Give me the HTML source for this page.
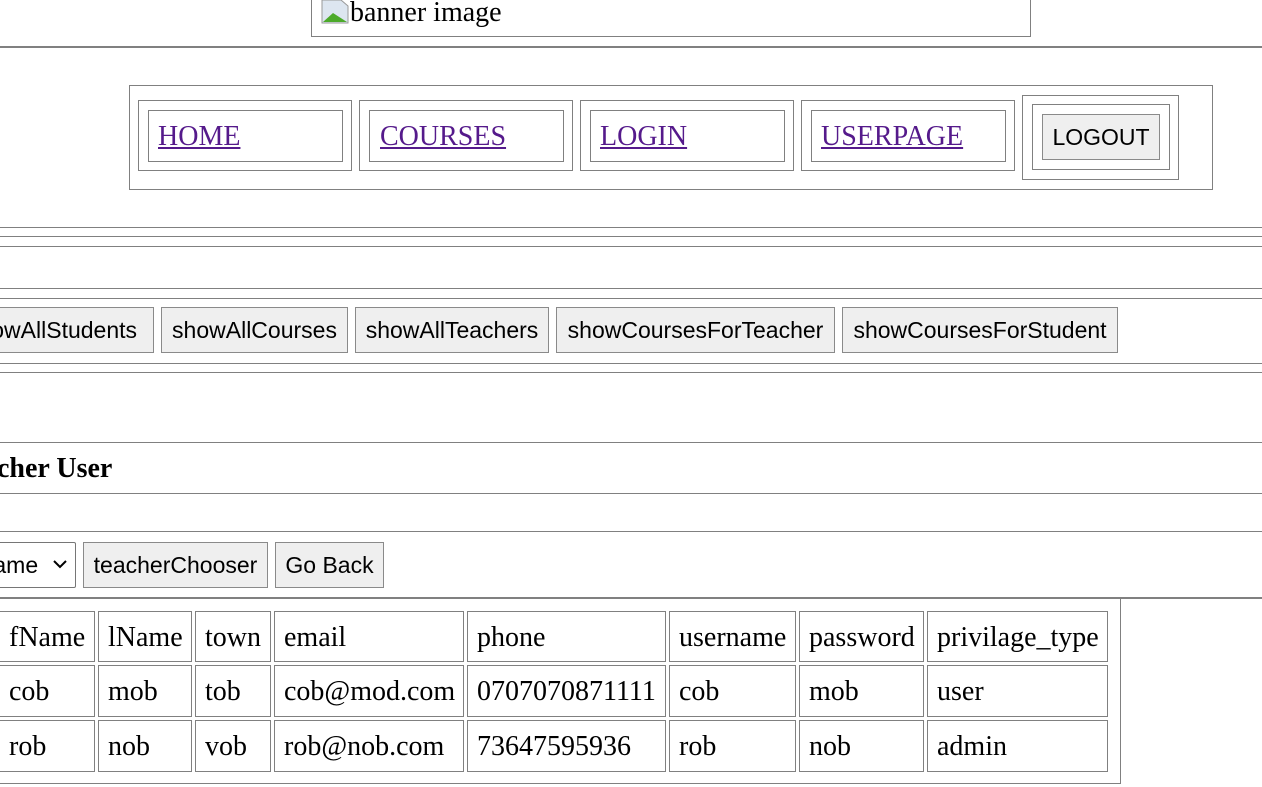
<!DOCTYPE html>
<html><head><meta charset="utf-8"><style>
body{margin:0;width:1262px;height:787px;overflow:hidden;position:relative;background:#fff;font-family:"Liberation Serif",serif;}
.a{position:absolute;box-sizing:border-box;}
.b{border:1px solid #808080;}
.h{position:absolute;left:0;width:1262px;height:1px;background:#808080;}
a{color:#551a8b;font-size:28px;text-decoration:underline;}
.btn{position:absolute;box-sizing:border-box;border:1px solid #8a8a8a;background:#efefef;font-family:"Liberation Sans",sans-serif;font-size:23px;color:#000;text-align:center;line-height:44px;height:46px;white-space:nowrap;}
.c{position:absolute;box-sizing:border-box;border:1px solid #808080;font-size:28px;line-height:52px;padding-left:9px;white-space:nowrap;}
</style></head><body>
<div class="a b" style="left:311px;top:-2px;width:720px;height:39px;"></div>
<svg class="a" style="left:321px;top:0px" width="28" height="24" viewBox="0 0 28 24"><path d="M1 0H20L27 6V23H1Z" fill="#dde6f0" stroke="#999"/><path d="M2 22L12 13 26 22Z" fill="#4caa2a"/></svg>
<div class="a" style="left:350px;top:-4px;font-size:28px;line-height:34px;">banner image</div>
<div class="h" style="top:46px;height:2px;"></div>

<div class="a b" style="left:129px;top:85px;width:1084px;height:105px;"></div>
<div class="a b" style="left:138px;top:100px;width:214px;height:71px;"></div>
<div class="a b" style="left:148px;top:110px;width:195px;height:52px;padding:10px 0 0 9px;"><a>HOME</a></div>
<div class="a b" style="left:359px;top:100px;width:214px;height:71px;"></div>
<div class="a b" style="left:369px;top:110px;width:195px;height:52px;padding:10px 0 0 10px;"><a>COURSES</a></div>
<div class="a b" style="left:580px;top:100px;width:214px;height:71px;"></div>
<div class="a b" style="left:590px;top:110px;width:195px;height:52px;padding:10px 0 0 9px;"><a>LOGIN</a></div>
<div class="a b" style="left:801px;top:100px;width:214px;height:71px;"></div>
<div class="a b" style="left:811px;top:110px;width:195px;height:52px;padding:10px 0 0 9px;"><a>USERPAGE</a></div>
<div class="a b" style="left:1022px;top:95px;width:157px;height:85px;"></div>
<div class="a b" style="left:1032px;top:104px;width:138px;height:66px;"></div>
<div class="btn" style="left:1042px;top:114px;width:118px;">LOGOUT</div>

<div class="h" style="top:227px"></div><div class="h" style="top:236px"></div><div class="h" style="top:246px"></div>
<div class="h" style="top:288px"></div><div class="h" style="top:298px"></div>
<div class="btn" style="left:-50px;top:307px;width:204px;">showAllStudents</div>
<div class="btn" style="left:161px;top:307px;width:187px;">showAllCourses</div>
<div class="btn" style="left:355px;top:307px;width:194px;">showAllTeachers</div>
<div class="btn" style="left:556px;top:307px;width:279px;">showCoursesForTeacher</div>
<div class="btn" style="left:842px;top:307px;width:276px;">showCoursesForStudent</div>
<div class="h" style="top:363px"></div><div class="h" style="top:372px"></div>
<div class="h" style="top:442px"></div>
<div class="a" style="left:-3px;top:452px;font-size:28px;font-weight:bold;line-height:34px;">cher User</div>
<div class="h" style="top:493px"></div>
<div class="h" style="top:531px"></div>
<div class="a" style="left:-14px;top:542px;width:90px;height:46px;border:1px solid #767676;border-radius:2px;font-family:'Liberation Sans',sans-serif;font-size:23px;line-height:44px;">&nbsp;ame
<svg style="position:absolute;left:66px;top:17px" width="14" height="10"><path d="M1 1L7 7 13 1" fill="none" stroke="#000" stroke-width="2"/></svg></div>
<div class="btn" style="left:83px;top:542px;width:185px;">teacherChooser</div>
<div class="btn" style="left:275px;top:542px;width:109px;">Go Back</div>
<div class="h" style="top:597px;height:2px;"></div>
<div class="a b" style="left:-10px;top:598px;width:1131px;height:186px;"></div>

<div class="c" style="left:-1px;top:611px;width:96px;height:51px;">fName</div>
<div class="c" style="left:98px;top:611px;width:94px;height:51px;">lName</div>
<div class="c" style="left:195px;top:611px;width:76px;height:51px;">town</div>
<div class="c" style="left:274px;top:611px;width:190px;height:51px;">email</div>
<div class="c" style="left:467px;top:611px;width:199px;height:51px;">phone</div>
<div class="c" style="left:669px;top:611px;width:127px;height:51px;">username</div>
<div class="c" style="left:799px;top:611px;width:125px;height:51px;">password</div>
<div class="c" style="left:927px;top:611px;width:181px;height:51px;">privilage_type</div>

<div class="c" style="left:-1px;top:665px;width:96px;height:52px;">cob</div>
<div class="c" style="left:98px;top:665px;width:94px;height:52px;">mob</div>
<div class="c" style="left:195px;top:665px;width:76px;height:52px;">tob</div>
<div class="c" style="left:274px;top:665px;width:190px;height:52px;">cob@mod.com</div>
<div class="c" style="left:467px;top:665px;width:199px;height:52px;">0707070871111</div>
<div class="c" style="left:669px;top:665px;width:127px;height:52px;">cob</div>
<div class="c" style="left:799px;top:665px;width:125px;height:52px;">mob</div>
<div class="c" style="left:927px;top:665px;width:181px;height:52px;">user</div>

<div class="c" style="left:-1px;top:720px;width:96px;height:52px;">rob</div>
<div class="c" style="left:98px;top:720px;width:94px;height:52px;">nob</div>
<div class="c" style="left:195px;top:720px;width:76px;height:52px;">vob</div>
<div class="c" style="left:274px;top:720px;width:190px;height:52px;">rob@nob.com</div>
<div class="c" style="left:467px;top:720px;width:199px;height:52px;">73647595936</div>
<div class="c" style="left:669px;top:720px;width:127px;height:52px;">rob</div>
<div class="c" style="left:799px;top:720px;width:125px;height:52px;">nob</div>
<div class="c" style="left:927px;top:720px;width:181px;height:52px;">admin</div>
</body></html>
